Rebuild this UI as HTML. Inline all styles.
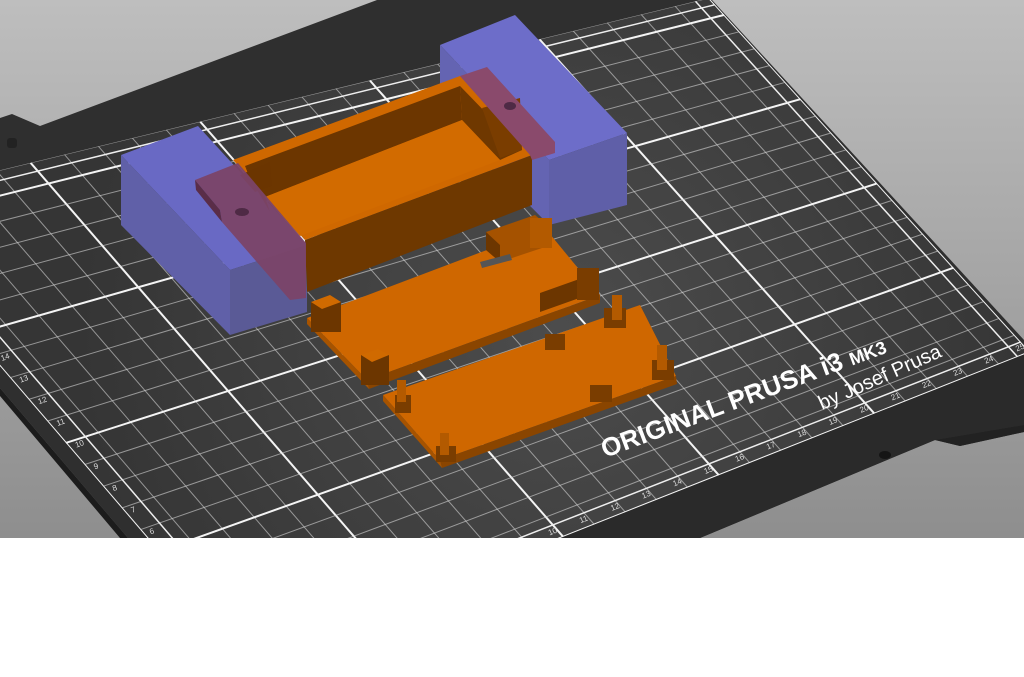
<!DOCTYPE html>
<html><head><meta charset="utf-8"><style>
html,body{margin:0;padding:0;background:#fff;width:1024px;height:677px;overflow:hidden}
svg{display:block}
</style></head><body>
<svg id="s" width="1024" height="677" viewBox="0 0 1024 677" xmlns="http://www.w3.org/2000/svg">
<defs>
<linearGradient id="bg" x1="0" y1="0" x2="0" y2="1">
<stop offset="0" stop-color="#bebebe"/><stop offset="1" stop-color="#8e8e8e"/></linearGradient>
<radialGradient id="sf" cx="560" cy="330" r="480" gradientUnits="userSpaceOnUse">
<stop offset="0" stop-color="#4c4c4c"/><stop offset="1" stop-color="#353535"/></radialGradient>
<clipPath id="cp"><polygon id="cpp" points="0,0"/></clipPath>
<clipPath id="view"><rect x="0" y="0" width="1024" height="538"/></clipPath>
</defs>
<g clip-path="url(#view)">
<rect x="0" y="0" width="1024" height="538" fill="url(#bg)"/>
<polygon points="0,118 12,114 40,126 377,0 712,0 1024,340 1024,432 960,446 935,440 700,538 128,538 0,388" fill="#2f2f2f"/>
<polygon points="935,440 1024,425 1024,432 960,446" fill="#222"/>
<polygon points="0,388 128,538 120,538 0,396" fill="#1c1c1c"/>
<polygon points="560,538 1024,346 1024,425 935,440 700,538" fill="#2a2a2a"/>
<ellipse cx="885" cy="455" rx="6" ry="4" fill="#151515"/>
<rect x="7" y="138" width="10" height="10" rx="3" fill="#222"/>
<g id="surf"></g>
<text x="605" y="458" transform="rotate(-20.5 605 458)" font-family="Liberation Sans, sans-serif" font-size="26" fill="#fff" font-weight="bold" letter-spacing="0.2">ORIGINAL PRUSA i3 <tspan font-size="18">MK3</tspan></text>
<text x="822" y="410" transform="rotate(-24 822 410)" font-family="Liberation Sans, sans-serif" font-size="20" fill="#fff">by Josef Prusa</text>

<polygon points="440,45 515,15 627,133 549,160" fill="#6d6dc9"/>
<polygon points="440,45 549,160 549,225 440,115" fill="#6464b2"/>
<polygon points="549,160 627,133 627,205 549,225" fill="#5f5fa8"/>
<polygon points="121,155 198,126 307,245 230,270" fill="#6969c4"/>
<polygon points="121,155 230,270 230,335 121,225" fill="#6060a8"/>
<polygon points="230,270 307,245 307,312 230,335" fill="#5a5a96"/>

<polygon points="233,160 460,76 532,155 305,240" fill="#cf6800"/>
<polygon points="245,166 460,86 462,120 265,197" fill="#6c3600"/>
<polygon points="245,166 265,197 270,212 250,178" fill="#5e2f00"/>
<polygon points="460,86 522,150 500,160 462,120" fill="#6f3800"/>
<polygon points="265,197 462,120 500,160 300,236" fill="#d26b00"/>
<polygon points="305,240 532,155 532,205 307,292" fill="#6e3800"/>
<polygon points="240,175 270,162 272,186 255,192" fill="#6b3500"/>
<polygon points="482,108 520,98 522,150 500,158" fill="#7a3d00"/>
<polygon points="195,180 238,163 306,243 306,298 290,300 222,222 220,210" fill="#7b4468" opacity="0.95"/>
<polygon points="195,180 220,210 222,222 196,190" fill="#5a2d48"/>
<ellipse cx="242" cy="212" rx="7" ry="4" fill="#4e2a45"/>
<polygon points="460,76 487,67 555,142 555,153 532,160 530,155" fill="#8a4a6c"/>
<ellipse cx="510" cy="106" rx="6" ry="4" fill="#4e2a45"/>

<polygon points="307,318 545,228 600,295 367,380" fill="#cf6700"/>
<polygon points="367,380 600,295 600,303 369,389" fill="#8a4500"/>
<polygon points="307,318 367,380 369,389 307,324" fill="#a65300"/>
<polygon points="486,232 535,215 548,226 548,246 500,262 486,250" fill="#a55200"/>
<polygon points="486,232 500,245 500,262 486,250" fill="#6c3600"/>
<rect x="530" y="218" width="22" height="30" fill="#b35a00"/>
<rect x="311" y="302" width="30" height="30" fill="#6c3600"/>
<polygon points="311,302 330,295 341,302 322,309" fill="#d06a00"/>
<rect x="361" y="355" width="28" height="30" fill="#6c3600"/>
<polygon points="361,355 378,349 389,355 372,362" fill="#d06a00"/>
<polygon points="540,293 585,277 585,296 540,312" fill="#6c3600"/>
<rect x="577" y="268" width="22" height="32" fill="#7a3d00"/>
<polygon points="480,262 510,254 512,260 482,268" fill="#555"/>
<polygon points="383,395 640,305 676,376 440,460" fill="#cf6700"/>
<polygon points="440,460 676,376 677,384 442,468" fill="#8a4500"/>
<polygon points="383,395 440,460 442,468 383,401" fill="#a65300"/>
<rect x="395" y="395" width="16" height="18" fill="#7a3d00"/>
<rect x="397" y="380" width="9" height="22" fill="#b35a00"/>
<rect x="436" y="446" width="20" height="16" fill="#7a3d00"/>
<rect x="440" y="433" width="9" height="22" fill="#b35a00"/>
<rect x="545" y="334" width="20" height="16" fill="#7a3d00"/>
<rect x="590" y="385" width="22" height="17" fill="#7a3d00"/>
<rect x="604" y="308" width="22" height="20" fill="#7a3d00"/>
<rect x="612" y="295" width="10" height="25" fill="#b35a00"/>
<rect x="652" y="360" width="22" height="20" fill="#7a3d00"/>
<rect x="657" y="345" width="10" height="25" fill="#b35a00"/>
</g>
</svg>
<script>
(function(){
var P00=[252,660],P10=[1030,352],P11=[709,-2],P01=[-139,204];
function M(u,v){u/=25;v/=21;return[
(1-u)*(1-v)*P00[0]+u*(1-v)*P10[0]+u*v*P11[0]+(1-u)*v*P01[0],
(1-u)*(1-v)*P00[1]+u*(1-v)*P10[1]+u*v*P11[1]+(1-u)*v*P01[1]];}
var g=document.getElementById("surf");
var pts=[P00,P10,P11,P01].map(function(p){return p.join(",")}).join(" ");
document.getElementById("cpp").setAttribute("points",pts);
var h='<polygon points="'+pts+'" fill="url(#sf)"/><g clip-path="url(#cp)">';
function L(a,b,w,c){h+='<line x1="'+a[0].toFixed(1)+'" y1="'+a[1].toFixed(1)+'" x2="'+b[0].toFixed(1)+'" y2="'+b[1].toFixed(1)+'" stroke="'+c+'" stroke-width="'+w+'"/>';}
for(var u=0;u<=25;u++){var mj=(u%5==0);L(M(u,0),M(u,21),mj?2:1,mj?"#f4f4f4":"rgba(215,215,215,0.6)");}
for(var v=0;v<=21;v++){var mj=(v%5==0);L(M(0,v),M(25,v),mj?2:1,mj?"#f4f4f4":"rgba(215,215,215,0.6)");}
L(M(0,0.6),M(25,0.6),1.5,"#eee");L(M(0.6,0),M(0.6,21),1.5,"#eee");
L(M(24.6,0),M(24.6,21),1.5,"#eee");L(M(0,20.6),M(25,20.6),1.5,"#eee");
for(var u=1;u<=25;u++){var p=M(u-0.3,0.25);h+='<text x="'+p[0]+'" y="'+p[1]+'" font-family="Liberation Sans,sans-serif" font-size="8" fill="#ddd" transform="rotate(-22 '+p[0]+' '+p[1]+')">'+u+'</text>';}
for(var v=1;v<=21;v++){var p=M(0.15,v-0.3);h+='<text x="'+p[0]+'" y="'+p[1]+'" font-family="Liberation Sans,sans-serif" font-size="8" fill="#ddd" transform="rotate(-20 '+p[0]+' '+p[1]+')">'+v+'</text>';}
h+='</g>';
g.innerHTML=h;
})();
</script>
</body></html>
